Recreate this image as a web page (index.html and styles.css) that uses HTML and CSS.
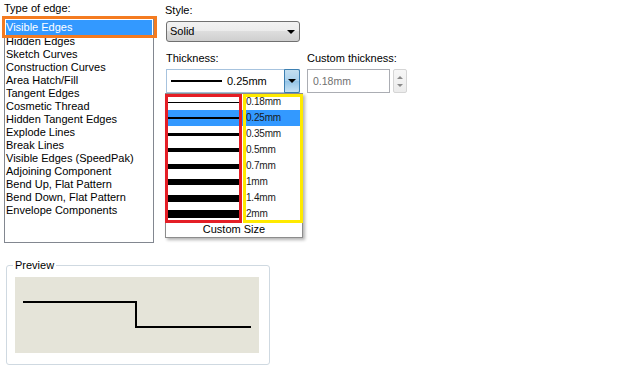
FILE: index.html
```html
<!DOCTYPE html>
<html>
<head>
<meta charset="utf-8">
<link rel="stylesheet" href="styles.css">
</head>
<body>
<div class="dialog">
  <div class="top">
    <div class="edge-col">
      <div class="label">Type of edge:</div>
      <ul class="listbox">
        <li class="sel">Visible Edges</li>
        <li>Hidden Edges</li>
        <li>Sketch Curves</li>
        <li>Construction Curves</li>
        <li>Area Hatch/Fill</li>
        <li>Tangent Edges</li>
        <li>Cosmetic Thread</li>
        <li>Hidden Tangent Edges</li>
        <li>Explode Lines</li>
        <li>Break Lines</li>
        <li>Visible Edges (SpeedPak)</li>
        <li>Adjoining Component</li>
        <li>Bend Up, Flat Pattern</li>
        <li>Bend Down, Flat Pattern</li>
        <li>Envelope Components</li>
      </ul>
    </div>
    <div class="props">
      <div class="label label-style">Style:</div>
      <div class="select">
        <span class="select-text">Solid</span>
        <span class="tri"></span>
      </div>
      <div class="thick-row">
        <div class="thick-col">
          <div class="label">Thickness:</div>
          <div class="combo">
            <span class="combo-line"></span>
            <span class="combo-val">0.25mm</span>
            <span class="combo-btn"><span class="tri"></span></span>
          </div>
        </div>
        <div class="custom-col">
          <div class="label">Custom thickness:</div>
          <div class="custom-row">
            <div class="input">0.18mm</div>
            <div class="spin">
              <span class="spin-up"></span>
              <span class="spin-down"></span>
            </div>
          </div>
        </div>
      </div>
    </div>
  </div>

  <fieldset class="preview">
    <legend class="preview-legend">Preview</legend>
    <div class="preview-area">
      <svg width="244" height="76" viewBox="0 0 244 76">
        <path d="M8 25 H121 V50 H236" fill="none" stroke="#000" stroke-width="2"/>
      </svg>
    </div>
  </fieldset>

  <div class="dropdown">
    <div class="dd-row"><span class="dd-line"><i class="w1"></i></span><span class="dd-val">0.18mm</span></div>
    <div class="dd-row dd-sel"><span class="dd-line"><i class="w2"></i></span><span class="dd-val">0.25mm</span></div>
    <div class="dd-row"><span class="dd-line"><i class="w3"></i></span><span class="dd-val">0.35mm</span></div>
    <div class="dd-row"><span class="dd-line"><i class="w4"></i></span><span class="dd-val">0.5mm</span></div>
    <div class="dd-row"><span class="dd-line"><i class="w5"></i></span><span class="dd-val">0.7mm</span></div>
    <div class="dd-row"><span class="dd-line"><i class="w6"></i></span><span class="dd-val">1mm</span></div>
    <div class="dd-row"><span class="dd-line"><i class="w7"></i></span><span class="dd-val">1.4mm</span></div>
    <div class="dd-row"><span class="dd-line"><i class="w8"></i></span><span class="dd-val">2mm</span></div>
    <div class="dd-custom">Custom Size</div>
  </div>

  <div class="mark mark-orange"></div>
  <div class="mark mark-red"></div>
  <div class="mark mark-yellow"></div>
</div>
</body>
</html>
```

FILE: styles.css
```css
* { box-sizing: border-box; }

html, body {
  margin: 0;
  padding: 0;
  background: #ffffff;
}

body {
  font-family: "Liberation Sans", Arial, sans-serif;
  font-size: 11px;
  color: #000;
}

.dialog {
  position: relative;
  width: 632px;
  height: 380px;
}

.top {
  display: flex;
  align-items: flex-start;
}

.label {
  line-height: 13px;
  height: 13px;
  white-space: nowrap;
}

/* ---------- left column ---------- */
.edge-col {
  width: 150px;
  margin-left: 4px;
  padding-top: 2px;
}

.listbox {
  list-style: none;
  margin: 3px 0 0 0;
  padding: 1px 0 0 0;
  width: 150px;
  height: 225px;
  border: 1px solid #828790;
}

.listbox li {
  line-height: 13px;
  height: 13px;
  padding-left: 1px;
  white-space: nowrap;
}

.listbox li.sel {
  height: 15px;
  line-height: 15px;
  margin: 0 1px 0 1px;
  padding-left: 0;
  background: #3399ff;
  color: #fff;
}

/* ---------- right column ---------- */
.props {
  margin-left: 11px;
  padding-top: 4px;
}

.select {
  margin: 4px 0 0 1px;
  width: 134px;
  height: 21px;
  border: 1px solid #707070;
  border-radius: 3px;
  background: linear-gradient(#f2f2f2 0%, #ebebeb 50%, #dddddd 50%, #cfcfcf 100%);
  display: flex;
  align-items: center;
  justify-content: space-between;
  padding: 0 4px 0 3px;
}

.select-text {
  line-height: 13px;
}

.tri {
  width: 0;
  height: 0;
  border-left: 4px solid transparent;
  border-right: 4px solid transparent;
  border-top: 4px solid #000;
}

.thick-row {
  display: flex;
  gap: 7px;
  margin-top: 10px;
}

.thick-col .label {
  margin-left: 1px;
}

.combo {
  margin: 4px 0 0 1px;
  width: 134px;
  height: 24px;
  border: 1px solid #a7c3de;
  background: #fff;
  display: flex;
  align-items: center;
  padding-left: 4px;
}

.combo-line {
  width: 51px;
  height: 2px;
  background: #000;
}

.combo-val {
  margin-left: 5px;
  line-height: 13px;
  flex: 1;
}

.combo-btn {
  align-self: stretch;
  width: 16px;
  margin: -1px -1px -1px 0;
  border: 1px solid #3c7fb1;
  border-radius: 0 2px 2px 0;
  background: linear-gradient(#c4dff1 0%, #a9d0ec 50%, #92c3e6 50%, #c7e2f4 100%);
  display: flex;
  align-items: center;
  justify-content: center;
}

.custom-row {
  display: flex;
  gap: 3px;
  margin-top: 4px;
}

.input {
  width: 83px;
  height: 24px;
  border: 1px solid #abadb3;
  background: #fff;
  color: #707070;
  font-size: 10.5px;
  line-height: 22px;
  padding-left: 5px;
}

.spin {
  width: 14px;
  height: 24px;
  border: 1px solid #d5d5d5;
  border-radius: 2px;
  background: linear-gradient(#f7f7f7, #ececec);
  display: flex;
  flex-direction: column;
  align-items: center;
  justify-content: space-around;
  padding: 3px 0;
}

.spin-up {
  width: 0;
  height: 0;
  border-left: 3px solid transparent;
  border-right: 3px solid transparent;
  border-bottom: 3px solid #8a8a8a;
}

.spin-down {
  width: 0;
  height: 0;
  border-left: 3px solid transparent;
  border-right: 3px solid transparent;
  border-top: 3px solid #8a8a8a;
}

/* ---------- preview ---------- */
.preview {
  margin: 16px 0 0 6px;
  width: 264px;
  padding: 6px 10px 11px 8px;
  border: 1px solid #cfd9e1;
  border-radius: 3px;
}

.preview-legend {
  padding: 0 2px;
  margin-left: -2px;
  line-height: 12px;
  font-size: 11px;
}

.preview-area {
  width: 244px;
  height: 76px;
  background: #e5e4d9;
}

.preview-area svg {
  display: block;
}

/* ---------- dropdown (open list) ---------- */
.dropdown {
  position: absolute;
  left: 165px;
  top: 93px;
  width: 138px;
  height: 145px;
  border: 1px solid #8c8c8c;
  background: #fff;
  box-shadow: 2px 2px 3px rgba(0, 0, 0, 0.3);
  padding-top: 0;
}

.dd-row {
  display: flex;
  align-items: center;
  height: 16px;
  margin: 0 2px;
}

.dd-sel {
  background: #3399ff;
}

.dd-line {
  width: 74px;
  display: flex;
  align-items: center;
}

.dd-line i {
  display: block;
  width: 73px;
  background: #000;
}

.dd-line .w1 { height: 1px; }
.dd-line .w2 { height: 2px; }
.dd-line .w3 { height: 3px; }
.dd-line .w4 { height: 4px; }
.dd-line .w5 { height: 5px; }
.dd-line .w6 { height: 6px; }
.dd-line .w7 { height: 7px; }
.dd-line .w8 { height: 8px; }

.dd-val {
  padding-left: 4px;
  font-size: 10px;
  letter-spacing: -0.2px;
  color: #1a1a1a;
  line-height: 12px;
}

.dd-custom {
  height: 15px;
  line-height: 15px;
  text-align: center;
}

/* ---------- annotation marks ---------- */
.mark {
  position: absolute;
  pointer-events: none;
}

.mark-orange {
  left: 2px;
  top: 16px;
  width: 155px;
  height: 22px;
  border: 3px solid #f47b20;
}

.mark-red {
  left: 165px;
  top: 94px;
  width: 77px;
  height: 129px;
  border: 3px solid #e41e26;
}

.mark-yellow {
  left: 243px;
  top: 94px;
  width: 60px;
  height: 129px;
  border: 3px solid #ffea00;
}
```
